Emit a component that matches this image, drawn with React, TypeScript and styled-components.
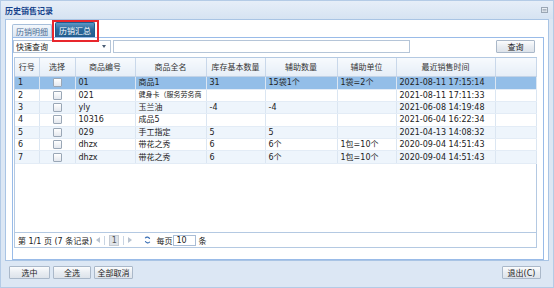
import styled, { createGlobalStyle } from "styled-components";

const GlobalStyle = createGlobalStyle`
    html, body {
        margin: 0;
        padding: 0;
        background: #ffffff;
    }
    * {
        box-sizing: border-box;
    }
`;

const font = `"DejaVu Sans", "Noto Sans CJK SC", sans-serif`;

const Win = styled.div`
    width: 554px;
    height: 288px;
    display: flex;
    flex-direction: column;
    background: #dce7f4;
    border: 1px solid #b4cbe6;
    font-family: ${font};
    font-size: 8px;
    color: #222;
    overflow: hidden;
`;

const TitleBar = styled.div`
    height: 18px;
    flex: none;
    display: flex;
    align-items: center;
    justify-content: space-between;
    padding: 0 5px 0 4px;
    background: linear-gradient(#e6eef8, #d6e3f2);
    color: #15428b;
    font-weight: bold;
    font-size: 8px;
`;

const Panel = styled.div`
    flex: none;
    height: 242px;
    margin: 0 4px;
    background: #fff;
    border: 1px solid #a9c4e4;
    padding: 0 4px 0 6px;
    display: flex;
    flex-direction: column;
`;

const TabStrip = styled.div`
    height: 18px;
    flex: none;
    display: flex;
    align-items: flex-end;
    gap: 3px;
    border-bottom: 1px solid #99bbe8;
`;

const Tab = styled.div<{ $active?: boolean }>`
    position: relative;
    height: ${(p) => (p.$active ? "15px" : "13px")};
    padding: 0 3px;
    display: flex;
    align-items: center;
    border: 1px solid ${(p) => (p.$active ? "#1f5c8e" : "#a7bfdb")};
    border-bottom: none;
    border-radius: 2px 2px 0 0;
    background: ${(p) =>
        p.$active ? "linear-gradient(#5d97c6, #2c6a9c 45%, #235d8d)" : "linear-gradient(#f4f8fc, #dae6f3)"};
    color: ${(p) => (p.$active ? "#fff" : "#4a6a92")};

    &::after {
        content: "";
        display: ${(p) => (p.$active ? "block" : "none")};
        position: absolute;
        left: -4px;
        right: -5px;
        top: -3px;
        bottom: -5px;
        border: 2px solid #e8262c;
    }
`;

const TabBody = styled.div`
    flex: 1;
    border: 1px solid #99bbe8;
    border-top: none;
    padding: 1px 8px 0 0;
    display: flex;
    flex-direction: column;
`;

const SearchRow = styled.div`
    display: flex;
    align-items: center;
    height: 14px;
`;

const Select = styled.div`
    width: 98px;
    height: 13px;
    border: 1px solid #b5c5d8;
    display: flex;
    align-items: center;
    justify-content: space-between;
    padding: 0 4px 0 2px;
    background: #fff;
`;

const Caret = styled.span`
    width: 0;
    height: 0;
    border-left: 2.5px solid transparent;
    border-right: 2.5px solid transparent;
    border-top: 3px solid #4b5d74;
`;

const SearchInput = styled.div`
    width: 297px;
    height: 13px;
    margin-left: 2px;
    border: 1px solid #b5c5d8;
    background: #fff;
`;

const Btn = styled.div<{ $w: number }>`
    width: ${(p) => p.$w}px;
    height: 13px;
    display: flex;
    align-items: center;
    justify-content: center;
    border: 1px solid #aab8c9;
    border-radius: 1px;
    background: linear-gradient(#fbfcfd, #e9edf2 50%, #dde3ea);
    color: #222;
`;

const Spacer = styled.div`
    flex: 1;
`;

const Grid = styled.div`
    margin-top: 4px;
    margin-left: 1px;
    width: 523px;
    height: 191px;
    border: 1px solid #b4c9e2;
    display: flex;
    flex-direction: column;
`;

const GridScroll = styled.div`
    flex: 1;
    background: #fff;
`;

const Table = styled.table`
    width: 521px;
    table-layout: fixed;
    border-collapse: collapse;
`;

const Th = styled.th`
    height: 18px;
    font-weight: normal;
    text-align: center;
    color: #333;
    background: linear-gradient(#f7fafd, #e6eef7);
    border-right: 1px solid #c9d8ea;
    border-bottom: 1px solid #c2d3e7;
    padding: 0;
    white-space: nowrap;
    overflow: hidden;
`;

const Tr = styled.tr<{ $sel?: boolean; $alt?: boolean }>`
    height: ${(p) => (p.$sel ? "13px" : "12.4px")};
    background: ${(p) => (p.$sel ? "#93bee8" : p.$alt ? "#eef5fc" : "#fff")};
`;

const Td = styled.td<{ $center?: boolean; $tight?: boolean }>`
    padding: ${(p) => (p.$tight ? "0 1px 0 3px" : "0 3px")};
    border-right: 1px solid #dbe6f2;
    border-bottom: 1px solid #e3ecf6;
    text-align: ${(p) => (p.$center ? "center" : "left")};
    font-size: ${(p) => (p.$tight ? "7px" : "8px")};
    white-space: nowrap;
    overflow: hidden;
    line-height: 11px;
`;

const Check = styled.span`
    display: inline-block;
    width: 9px;
    height: 9px;
    vertical-align: middle;
    border: 1px solid #9aa7b6;
    border-radius: 1px;
    background: linear-gradient(#ffffff, #e4e8ee);
`;

const Paging = styled.div`
    height: 15px;
    flex: none;
    border-top: 1px solid #b4c9e2;
    background: #fff;
    display: flex;
    align-items: center;
    padding-left: 3px;
`;

const PageText = styled.span<{ $ml?: number }>`
    margin-left: ${(p) => p.$ml ?? 0}px;
    white-space: nowrap;
`;

const Sep = styled.span`
    width: 1px;
    height: 9px;
    margin: 0 4px;
    background: #c8d4e2;
`;

const Arrow = styled.span<{ $dir: "l" | "r" }>`
    width: 0;
    height: 0;
    border-top: 3px solid transparent;
    border-bottom: 3px solid transparent;
    ${(p) => (p.$dir === "l" ? "border-right: 4px solid #b8c3d0;" : "border-left: 4px solid #b8c3d0;")}
`;

const PageBox = styled.span`
    width: 10px;
    height: 11px;
    display: flex;
    align-items: center;
    justify-content: center;
    background: #dfe3e8;
    border: 1px solid #c6ccd4;
    color: #555;
`;

const PerPage = styled.span`
    width: 23px;
    height: 11px;
    margin: 0 2px 0 1px;
    border: 1px solid #a9bdd6;
    padding-left: 2px;
    display: flex;
    align-items: center;
`;

const Footer = styled.div`
    flex: 1;
    display: flex;
    align-items: center;
    padding: 0 12px 3px 8px;
    gap: 3px;
`;

const TitleTool = () => (
    <svg width="7" height="6" viewBox="0 0 7 6">
        <rect x="0.5" y="0.5" width="6" height="5" fill="#e9eef4" stroke="#9aa6b4" />
        <path d="M1.5 2.5h4M1.5 3.8h4" stroke="#9aa6b4" strokeWidth="0.8" />
    </svg>
);

const Refresh = () => (
    <svg width="7" height="8" viewBox="0 0 7 8" style={{ marginLeft: 12 }}>
        <path d="M1.2 2.2 A2.4 2.4 0 0 1 5.6 3" fill="none" stroke="#3a6fb5" strokeWidth="1.2" />
        <path d="M5.8 5.8 A2.4 2.4 0 0 1 1.4 5" fill="none" stroke="#3a6fb5" strokeWidth="1.2" />
    </svg>
);

type Row = [string, string, string, string, string, string, string];

const rows: Row[] = [
    ["01", "商品1", "31", "15袋1个", "1袋=2个", "2021-08-11 17:15:14", ""],
    ["021", "健身卡（服务劳务商", "", "", "", "2021-08-11 17:11:33", ""],
    ["yly", "玉兰油", "-4", "-4", "", "2021-06-08 14:19:48", ""],
    ["10316", "成品5", "", "", "", "2021-06-04 16:22:34", ""],
    ["029", "手工指定", "5", "5", "", "2021-04-13 14:08:32", ""],
    ["dhzx", "带花之秀", "6", "6个", "1包=10个", "2020-09-04 14:51:43", ""],
    ["dhzx", "带花之秀", "6", "6个", "1包=10个", "2020-09-04 14:51:43", ""],
];

const widths = [24, 36, 60, 71, 59, 72, 59, 99, 41];
const heads = ["行号", "选择", "商品编号", "商品全名", "库存基本数量", "辅助数量", "辅助单位", "最近销售时间", ""];

export default function App() {
    return (
        <>
            <GlobalStyle />
            <Win>
                <TitleBar>
                    <span>历史销售记录</span>
                    <TitleTool />
                </TitleBar>
                <Panel>
                    <TabStrip>
                        <Tab>历销明细</Tab>
                        <Tab $active>历销汇总</Tab>
                    </TabStrip>
                    <TabBody>
                        <SearchRow>
                            <Select>
                                <span>快速查询</span>
                                <Caret />
                            </Select>
                            <SearchInput />
                            <Spacer />
                            <Btn $w={39}>查询</Btn>
                        </SearchRow>
                        <Grid>
                            <GridScroll>
                                <Table>
                                    <colgroup>
                                        {widths.map((w, i) => (
                                            <col key={i} style={{ width: w }} />
                                        ))}
                                    </colgroup>
                                    <thead>
                                        <tr>
                                            {heads.map((h, i) => (
                                                <Th key={i}>{h}</Th>
                                            ))}
                                        </tr>
                                    </thead>
                                    <tbody>
                                        {rows.map((r, i) => (
                                            <Tr key={i} $sel={i === 0} $alt={i % 2 === 0}>
                                                <Td>{i + 1}</Td>
                                                <Td $center>
                                                    <Check />
                                                </Td>
                                                {r.map((c, j) => (
                                                    <Td key={j} $tight={j === 1 && c.length > 8}>
                                                        {c}
                                                    </Td>
                                                ))}
                                            </Tr>
                                        ))}
                                    </tbody>
                                </Table>
                            </GridScroll>
                            <Paging>
                                <PageText>第 1/1 页 (7 条记录)</PageText>
                                <PageText $ml={4} />
                                <Arrow $dir="l" />
                                <Sep />
                                <PageBox>1</PageBox>
                                <Sep />
                                <Arrow $dir="r" />
                                <Refresh />
                                <PageText $ml={5}>每页</PageText>
                                <PerPage>10</PerPage>
                                <PageText>条</PageText>
                            </Paging>
                        </Grid>
                    </TabBody>
                </Panel>
                <Footer>
                    <Btn $w={41}>选中</Btn>
                    <Btn $w={38}>全选</Btn>
                    <Btn $w={39}>全部取消</Btn>
                    <Spacer />
                    <Btn $w={39}>退出(C)</Btn>
                </Footer>
            </Win>
        </>
    );
}
